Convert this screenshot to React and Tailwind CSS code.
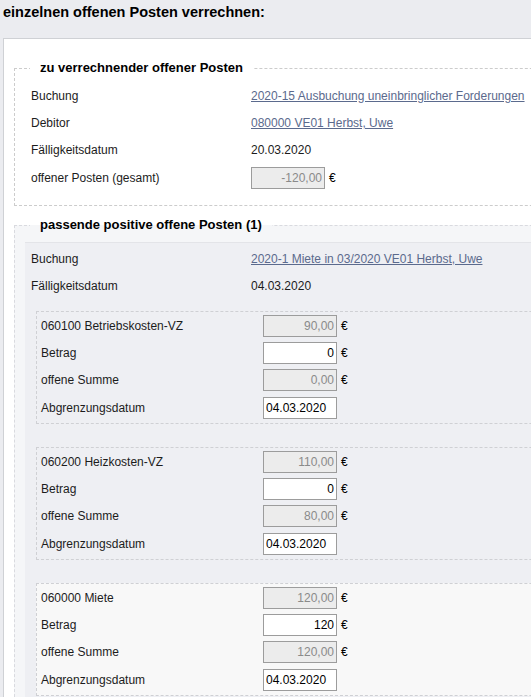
import React from "react";

function Amount({ value, readOnly }) {
  return (
    <div className="flex items-center">
      <input
        readOnly={readOnly}
        defaultValue={value}
        className={
          readOnly
            ? "box-border h-[22px] w-[74px] border border-[#9c9c9c] bg-[#ececec] pr-[2px] text-right text-[12px] text-[#8a8a8a] outline-none [font-family:'Liberation_Sans',Arial,sans-serif]"
            : "box-border h-[22px] w-[74px] border border-[#9c9c9c] bg-white pr-[2px] text-right text-[12px] text-black outline-none [font-family:'Liberation_Sans',Arial,sans-serif]"
        }
      />
      <span className="ml-[4px] text-black">€</span>
    </div>
  );
}

function DateInput({ value }) {
  return (
    <input
      defaultValue={value}
      className="box-border h-[22px] w-[74px] border border-[#9c9c9c] bg-white pl-[2px] text-left text-[12px] text-black outline-none [font-family:'Liberation_Sans',Arial,sans-serif]"
    />
  );
}

function Link({ children }) {
  return (
    <a className="text-[#5b6a8d] underline decoration-[#5b6a8d] underline-offset-[1px]">
      {children}
    </a>
  );
}

function Row({ label, children }) {
  return (
    <div className="flex h-[27.33px] items-center">
      <div className="w-[220px] shrink-0">{label}</div>
      <div>{children}</div>
    </div>
  );
}

function SubRow({ label, children }) {
  return (
    <div className="flex h-[27.33px] items-center">
      <div className="w-[222px] shrink-0">{label}</div>
      <div>{children}</div>
    </div>
  );
}

function SubBox({ account, total, betrag, offen, date, highlight, first }) {
  return (
    <div
      className={
        (first ? "mt-[11px] " : "mt-[22.67px] ") +
        (highlight
          ? "ml-[5px] border border-dashed border-[#cfd0d4] bg-[#f8f8f8] pb-[2px] pl-[4px]"
          : "ml-[5px] border border-dashed border-[#cfd0d4] pb-[2px] pl-[4px]")
      }
    >
      <SubRow label={account}>
        <Amount value={total} readOnly />
      </SubRow>
      <SubRow label="Betrag">
        <Amount value={betrag} />
      </SubRow>
      <SubRow label="offene Summe">
        <Amount value={offen} readOnly />
      </SubRow>
      <SubRow label="Abgrenzungsdatum">
        <DateInput value={date} />
      </SubRow>
    </div>
  );
}

export default function App() {
  return (
    <div className="min-h-[697px] w-full overflow-hidden bg-[#ebecf0] text-[12px] text-[#1c1c1c] [font-family:'Liberation_Sans',Arial,sans-serif]">
      <div className="pl-[3px]">
        <h1 className="h-[38px] pt-[4px] text-[14.5px] font-bold leading-[17px] text-black">
          einzelnen offenen Posten verrechnen:
        </h1>
        <div className="min-h-[659px] w-[640px] border-l border-t border-[#cfd1d5] bg-white pl-[10px] pt-[21px]">
          <fieldset className="border border-dashed border-[#cccccc] pb-[14px] pl-[16px] pt-[6px]">
            <legend className="-ml-px px-[10px] text-[13px] font-bold leading-[16px] text-black">
              zu verrechnender offener Posten
            </legend>
            <Row label="Buchung">
              <Link>2020-15 Ausbuchung uneinbringlicher Forderungen</Link>
            </Row>
            <Row label="Debitor">
              <Link>080000 VE01 Herbst, Uwe</Link>
            </Row>
            <Row label="Fälligkeitsdatum">20.03.2020</Row>
            <Row label="offener Posten (gesamt)">
              <Amount value="-120,00" readOnly />
            </Row>
          </fieldset>

          <fieldset className="mt-[11px] border border-dashed border-[#d9dadf] bg-[#f5f6f8] pl-[10px] pt-[9px]">
            <legend className="ml-[5px] px-[10px] text-[13px] font-bold leading-[16px] text-black">
              passende positive offene Posten (1)
            </legend>
            <div className="border-t border-[#e3e4e8] bg-[#eeeff3] pb-[20px] pl-[6px] pt-[2px]">
              <Row label="Buchung">
                <Link>2020-1 Miete in 03/2020 VE01 Herbst, Uwe</Link>
              </Row>
              <Row label="Fälligkeitsdatum">04.03.2020</Row>
              <SubBox
                first
                account="060100 Betriebskosten-VZ"
                total="90,00"
                betrag="0"
                offen="0,00"
                date="04.03.2020"
              />
              <SubBox
                account="060200 Heizkosten-VZ"
                total="110,00"
                betrag="0"
                offen="80,00"
                date="04.03.2020"
              />
              <SubBox
                highlight
                account="060000 Miete"
                total="120,00"
                betrag="120"
                offen="120,00"
                date="04.03.2020"
              />
            </div>
          </fieldset>
        </div>
      </div>
    </div>
  );
}
